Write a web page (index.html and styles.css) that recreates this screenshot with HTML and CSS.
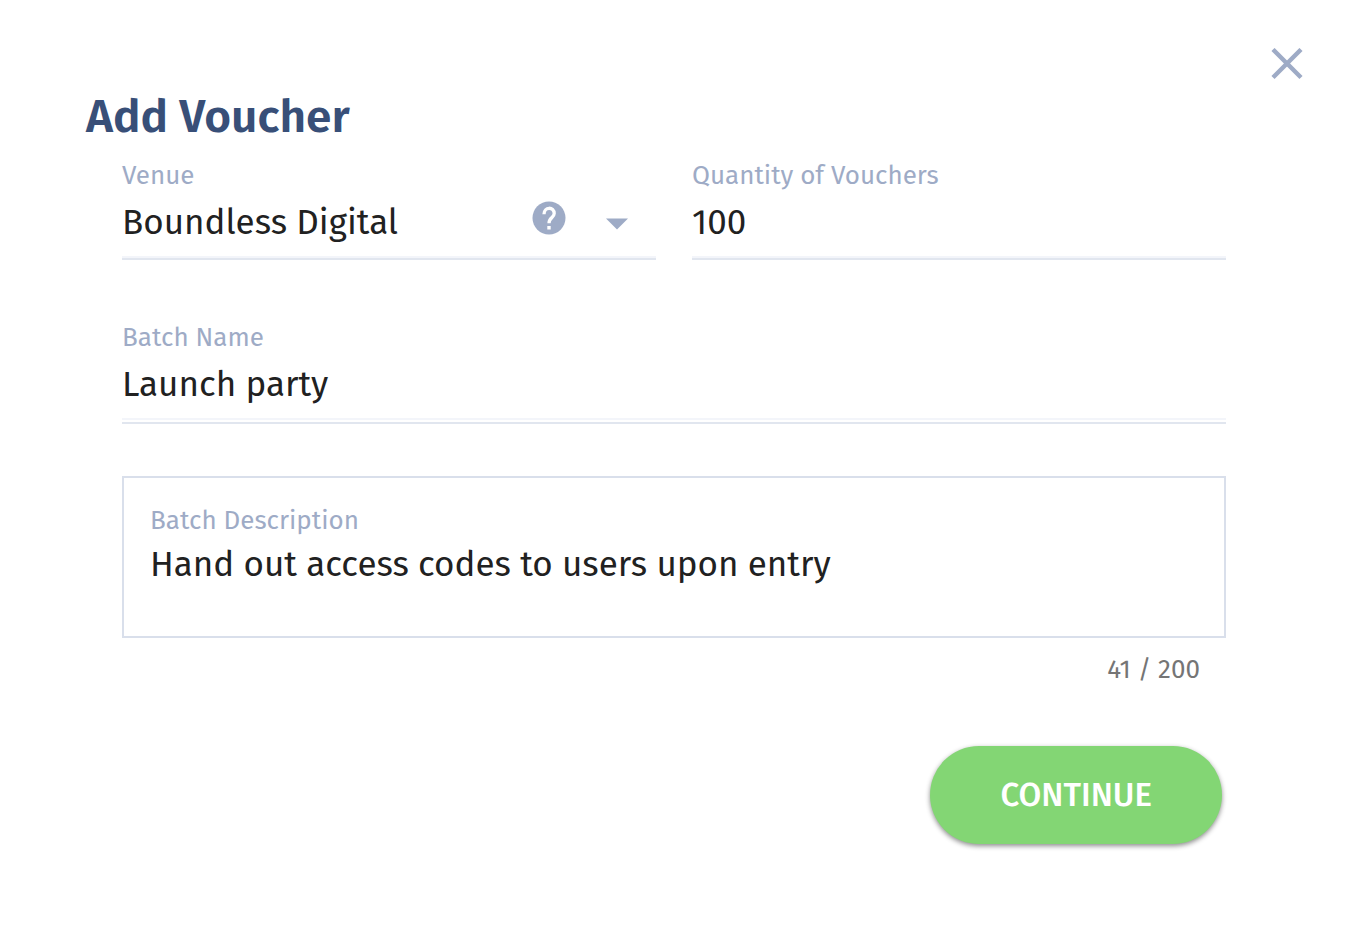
FILE: index.html
```html
<!DOCTYPE html>
<html lang="en">
<head>
    <meta charset="UTF-8">
    <meta name="viewport" content="width=device-width, initial-scale=1.0">
    <title>Add Voucher</title>
    <link rel="stylesheet" href="styles.css">
</head>
<body>
    <main class="dialog">
        <div class="dialog-top">
            <button type="button" class="close-button" aria-label="Close">
                <svg width="32" height="32" viewBox="0 0 32 32"><path d="M2 1.5L30 29.5M30 1.5L2 29.5" stroke="currentColor" stroke-width="4.4"/></svg>
            </button>
        </div>
        <h1 class="title">Add Voucher</h1>
        <form class="voucher-form">
            <div class="row">
                <div class="field">
                    <label for="venue">Venue</label>
                    <div class="select-wrap">
                        <select id="venue" class="control">
                            <option>Boundless Digital</option>
                        </select>
                        <div class="select-icons">
                            <button type="button" class="help-button" aria-label="Help">
                                <svg width="34" height="34" viewBox="0 0 34 34">
                                    <circle cx="17" cy="17" r="16.5" fill="currentColor"/>
                                    <path d="M12 13.2C12 5.4 22.2 5.4 22.2 12.6C22.2 16.6 17 16.6 17 22.2" fill="none" stroke="#fff" stroke-width="3.3"/>
                                    <path d="M15.3 25h3.4v3.4h-3.4z" fill="#fff"/>
                                </svg>
                            </button>
                            <svg class="arrow" width="22" height="12" viewBox="0 0 22 12"><path d="M0 0.5H22L11 11.5z" fill="currentColor"/></svg>
                        </div>
                    </div>
                </div>
                <div class="field">
                    <label for="quantity">Quantity of Vouchers</label>
                    <input type="text" id="quantity" class="control" inputmode="numeric" value="100">
                </div>
            </div>
            <div class="field field-double">
                <label for="batchName">Batch Name</label>
                <input type="text" id="batchName" class="control" value="Launch party">
            </div>
            <div class="description">
                <label for="batchDescription">Batch Description</label>
                <textarea id="batchDescription" rows="2" maxlength="200">Hand out access codes to users upon entry</textarea>
            </div>
            <p class="counter">41 / 200</p>
            <div class="actions">
                <button type="submit" class="continue-button">CONTINUE</button>
            </div>
        </form>
    </main>
</body>
</html>
```
FILE: styles.css
```css
* {
    box-sizing: border-box;
}

body {
    margin: 0;
    background: #fff;
    color: #212121;
    font-family: "Fira Sans", "Noto Sans", sans-serif;
}

button {
    padding: 0;
    border: none;
    background: none;
    color: #9eabc6;
    font-family: inherit;
    cursor: pointer;
}

svg {
    display: block;
}

.dialog {
    padding: 48px 47px 80px 86px;
}

.dialog-top {
    display: flex;
    justify-content: flex-end;
}

.title {
    margin: 8px 0 14px;
    color: #384f78;
    font-size: 46px;
    line-height: 58px;
    font-weight: 600;
}

.voucher-form {
    padding: 0 77px 0 36px;
}

.row {
    display: flex;
    gap: 36px;
    margin-bottom: 62px;
}

.field {
    flex: 1;
    border-bottom: 2px solid #e1e6ef;
}

.field-double {
    padding-bottom: 2px;
}

label {
    display: block;
    color: #9eabc6;
    font-size: 26px;
    line-height: 32px;
}

.control {
    display: block;
    width: 100%;
    height: 66px;
    padding: 0 0 4px;
    border: none;
    border-bottom: 2px solid #f3f5fa;
    border-radius: 0;
    background: none;
    color: inherit;
    font-family: inherit;
    font-size: 35px;
    outline: none;
    appearance: none;
}

.select-wrap {
    position: relative;
}

/* icons sit over the right end of the select */
.select-icons {
    position: absolute;
    top: 0;
    right: 28px;
    display: flex;
    align-items: center;
    gap: 40px;
    height: 52px;
    pointer-events: none;
}

.help-button {
    pointer-events: auto;
}

.arrow {
    margin-top: 12px;
    color: #9eabc6;
}

.description {
    margin-top: 52px;
    padding: 27px 26px 0;
    border: 2px solid #d9dfeb;
}

textarea {
    display: block;
    width: 100%;
    height: 99px;
    padding: 5px 0 0;
    border: none;
    background: none;
    color: inherit;
    font-family: inherit;
    font-size: 35px;
    line-height: 44px;
    resize: none;
    outline: none;
}

.counter {
    margin: 16px 26px 0;
    color: #757575;
    font-size: 26px;
    line-height: 32px;
    text-align: right;
}

.actions {
    display: flex;
    justify-content: flex-end;
    margin-top: 60px;
    padding-right: 4px;
}

.continue-button {
    padding: 26px 70px;
    border-radius: 49px;
    background: #83d674;
    box-shadow: 0 2px 5px rgba(0, 0, 0, 0.45);
    color: #fff;
    font-size: 33px;
    line-height: 46px;
    font-weight: 500;
}
```
